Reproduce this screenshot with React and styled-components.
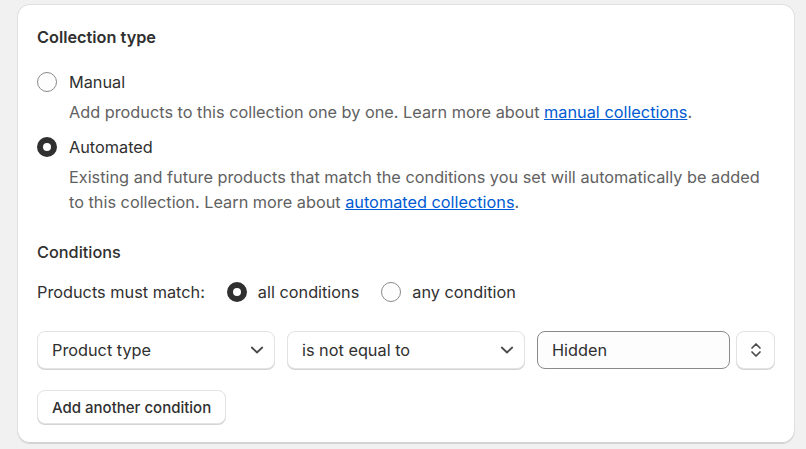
import React from 'react';
import styled, { createGlobalStyle } from 'styled-components';

const GlobalStyle = createGlobalStyle`
  html, body {
    margin: 0;
    padding: 0;
    background: #f1f1f1;
  }
  body {
    font-family: Inter, "Noto Sans", sans-serif;
    color: #303030;
    -webkit-font-smoothing: antialiased;
  }
`;

const Page = styled.div`
  padding: 5px 12px 6px 18px;
`;

const Card = styled.div`
  background: #fff;
  border-radius: 12px;
  box-shadow: 0 1px 0 0 rgba(26, 26, 26, 0.07), 0 0 0 1px rgba(0, 0, 0, 0.07), inset 0 -1px 0 0 #d4d4d4;
  padding: 20px 19px 19px 19px;
`;

const Heading = styled.div`
  font-size: 16.3px;
  font-weight: 600;
  line-height: 24px;
`;

const SubHeading = styled.div`
  font-size: 16.3px;
  font-weight: 450;
  line-height: 24px;
  margin-top: 25px;
`;

const RadioRow = styled.label`
  display: flex;
  align-items: center;
  gap: 12px;
  font-size: 16.3px;
  line-height: 24px;
  margin-top: ${(p) => p.$mt || 0}px;
`;

const Radio = styled.span`
  box-sizing: border-box;
  width: 20px;
  height: 20px;
  border-radius: 50%;
  flex: none;
  background: ${(p) => (p.$checked ? '#fff' : '#fdfdfd')};
  border: ${(p) => (p.$checked ? '6px solid #303030' : '1px solid #8a8a8a')};
`;

const Help = styled.div`
  font-size: 16.3px;
  line-height: 25px;
  color: #616161;
  padding-left: 32px;
  margin-top: 6px;
`;

const Link = styled.a`
  color: #005bd3;
  text-decoration: underline;
`;

const MatchRow = styled.div`
  display: flex;
  align-items: center;
  font-size: 16.3px;
  line-height: 24px;
  margin-top: 16px;
`;

const MatchLabel = styled.span`
  margin-right: 22px;
`;

const MatchOption = styled.span`
  display: flex;
  align-items: center;
  gap: 11px;
  margin-right: 22px;
`;

const ConditionRow = styled.div`
  display: flex;
  gap: 12px;
  margin-top: 27px;
  height: 38px;
`;

const ValueGroup = styled.div`
  display: flex;
  gap: 6px;
  flex: 1;
`;

const Select = styled.div`
  box-sizing: border-box;
  flex: 0 0 238px;
  display: flex;
  align-items: center;
  justify-content: space-between;
  padding: 0 10px 0 14px;
  border-radius: 8px;
  background: #fff;
  border: 1px solid #e3e3e3;
  box-shadow: 0 1px 0 0 #d4d4d4;
  font-size: 16.3px;
`;

const TextInput = styled.div`
  box-sizing: border-box;
  flex: 1;
  display: flex;
  align-items: center;
  padding: 0 14px;
  border-radius: 8px;
  background: #fdfdfd;
  border: 1px solid #8a8a8a;
  font-size: 16.3px;
`;

const Stepper = styled.div`
  box-sizing: border-box;
  flex: 0 0 39px;
  display: flex;
  align-items: center;
  justify-content: center;
  border-radius: 8px;
  background: #fff;
  border: 1px solid #e3e3e3;
  box-shadow: 0 1px 0 0 #d4d4d4;
`;

const Button = styled.button`
  box-sizing: border-box;
  display: block;
  margin-top: 21px;
  height: 34px;
  padding: 0 14px;
  border-radius: 8px;
  background: #fff;
  border: 1px solid #e3e3e3;
  box-shadow: 0 1px 0 0 #d4d4d4;
  font-family: inherit;
  font-size: 15px;
  font-weight: 550;
  color: #303030;
`;

const Chevron = () => (
  <svg width="14" height="14" viewBox="0 0 14 14" fill="none">
    <path d="M1.8 4.5 7 9.5l5.2-5" stroke="#4a4a4a" strokeWidth="1.8" strokeLinecap="round" strokeLinejoin="round" />
  </svg>
);

const UpDown = () => (
  <svg width="12" height="18" viewBox="0 0 12 18" fill="none">
    <path d="M2 7l4-4 4 4M2 11l4 4 4-4" stroke="#4a4a4a" strokeWidth="1.7" strokeLinecap="round" strokeLinejoin="round" />
  </svg>
);

const App = () => (
  <>
    <GlobalStyle />
    <Page>
      <Card>
        <Heading>Collection type</Heading>
        <RadioRow $mt={21}>
          <Radio />
          Manual
        </RadioRow>
        <Help>
          Add products to this collection one by one. Learn more about{' '}
          <Link href="#">manual collections</Link>.
        </Help>
        <RadioRow $mt={10}>
          <Radio $checked />
          Automated
        </RadioRow>
        <Help>
          Existing and future products that match the conditions you set will automatically be added
          to this collection. Learn more about <Link href="#">automated collections</Link>.
        </Help>
        <SubHeading>Conditions</SubHeading>
        <MatchRow>
          <MatchLabel>Products must match:</MatchLabel>
          <MatchOption>
            <Radio $checked />
            all conditions
          </MatchOption>
          <MatchOption>
            <Radio />
            any condition
          </MatchOption>
        </MatchRow>
        <ConditionRow>
          <Select>
            Product type
            <Chevron />
          </Select>
          <Select>
            is not equal to
            <Chevron />
          </Select>
          <ValueGroup>
            <TextInput>Hidden</TextInput>
            <Stepper>
              <UpDown />
            </Stepper>
          </ValueGroup>
        </ConditionRow>
        <Button>Add another condition</Button>
      </Card>
    </Page>
  </>
);

export default App;
